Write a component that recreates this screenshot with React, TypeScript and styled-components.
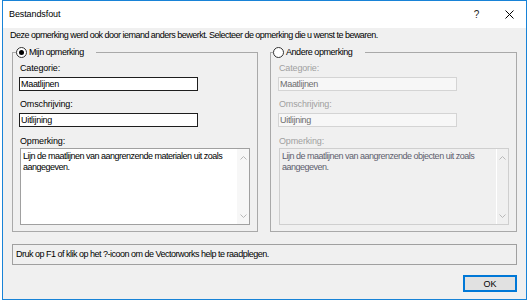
import React from "react";
import styled, { createGlobalStyle } from "styled-components";

const GlobalStyle = createGlobalStyle`
  html, body { margin: 0; padding: 0; background: #ffffff; }
  body { font-family: "Liberation Sans", Arial, sans-serif; font-size: 9px; color: #000; }
  * { box-sizing: border-box; }
`;

const Window = styled.div`
  margin-left: 2px;
  width: 525px;
  height: 300px;
  border: 1px solid #1883d7;
  display: flex;
  flex-direction: column;
`;

const TitleBar = styled.div`
  height: 27px;
  background: #ffffff;
  display: flex;
  align-items: center;
  padding-left: 6px;
`;

const TitleText = styled.div`
  flex: 1;
  font-size: 9px;
  line-height: 12px;
  margin-top: -1px;
  letter-spacing: -0.1px;
`;

const TitleButton = styled.div`
  width: 33px;
  height: 100%;
  display: flex;
  align-items: center;
  justify-content: center;
  font-size: 10px;
  color: #222;
`;

const Body = styled.div`
  flex: 1;
  background: #f0f0f0;
  padding: 1px 9px 0 9px;
  display: flex;
  flex-direction: column;
`;

const Instruction = styled.div`
  line-height: 12px;
  margin-left: -2px;
  height: 12px;
  white-space: nowrap;
  letter-spacing: -0.52px;
`;

const Groups = styled.div`
  display: grid;
  grid-template-columns: 246px 247px;
  column-gap: 12px;
  margin-top: 5px;
`;

const Group = styled.fieldset`
  margin: 0;
  padding: 0;
  height: 186px;
  border: 1px solid #a9a9a9;
  min-width: 0;
`;

const Legend = styled.legend<{ $width: number; $offset: number }>`
  padding: 0;
  margin-left: ${(p) => p.$offset}px;
  width: ${(p) => p.$width}px;
  height: 12px;
  display: flex;
  align-items: center;
  gap: 2px;
  line-height: 12px;
  letter-spacing: -0.45px;
`;

const Radio = styled.span<{ $checked?: boolean }>`
  width: 11px;
  height: 11px;
  border-radius: 50%;
  border: 1px solid #333;
  background: #fff;
  display: inline-flex;
  align-items: center;
  justify-content: center;
  flex: none;
  &::after {
    content: "";
    width: 5px;
    height: 5px;
    border-radius: 50%;
    background: ${(p) => (p.$checked ? "#000" : "transparent")};
  }
`;

const Content = styled.div<{ $inset: number }>`
  display: flex;
  flex-direction: column;
  padding: 4px 0 5px ${(p) => p.$inset}px;
  height: 172px;
`;

const Label = styled.div<{ $disabled?: boolean; $after: number; $before?: number }>`
  line-height: 12px;
  height: 12px;
  letter-spacing: -0.15px;
  color: ${(p) => (p.$disabled ? "#a0a0a0" : "#000")};
  margin-bottom: ${(p) => p.$after}px;
  margin-top: ${(p) => p.$before ?? 0}px;
`;

const Input = styled.div<{ $disabled?: boolean }>`
  width: 179px;
  height: 14px;
  line-height: 12px;
  padding-left: 1px;
  letter-spacing: -0.3px;
  border: 1px solid ${(p) => (p.$disabled ? "#d4d4d4" : "#1e1e1e")};
  background: ${(p) => (p.$disabled ? "#f7f7f7" : "#ffffff")};
  color: ${(p) => (p.$disabled ? "#6d6d6d" : "#000")};
  margin-left: -1px;
`;

const TextBox = styled.div<{ $disabled?: boolean }>`
  width: 230px;
  flex: 1;
  display: flex;
  border: 1px solid ${(p) => (p.$disabled ? "#cfcfcf" : "#a0a0a0")};
  background: ${(p) => (p.$disabled ? "#f0f0f0" : "#ffffff")};
  color: ${(p) => (p.$disabled ? "#5e5e6e" : "#000")};
`;

const TextBody = styled.div`
  flex: 1;
  padding: 2px 2px 0 2px;
  line-height: 11px;
  letter-spacing: -0.5px;
`;

const ScrollBar = styled.div<{ $disabled?: boolean }>`
  width: 12px;
  display: flex;
  flex-direction: column;
  justify-content: space-between;
  align-items: center;
  padding: 7px 0 6px;
  background: ${(p) => (p.$disabled ? "#f0f0f0" : "#f7f7f7")};
  border-left: 1px solid ${(p) => (p.$disabled ? "#ffffff" : "#f7f7f7")};
`;

const StatusBox = styled.div`
  margin-top: 12px;
  height: 21px;
  border: 1px solid #a0a0a0;
  line-height: 19px;
  padding-left: 3px;
  width: 505px;
  letter-spacing: -0.5px;
`;

const Footer = styled.div`
  display: flex;
  justify-content: flex-end;
  margin-top: 10px;
`;

const OkButton = styled.div`
  width: 54px;
  height: 17px;
  border: 2px solid #0078d7;
  background: #e1e1e1;
  display: flex;
  align-items: center;
  justify-content: center;
  line-height: 12px;
`;

const Chevron = ({ up }: { up?: boolean }) => (
  <svg width="7" height="4" viewBox="0 0 7 4">
    <polyline
      points={up ? "0.5,3.5 3.5,0.5 6.5,3.5" : "0.5,0.5 3.5,3.5 6.5,0.5"}
      fill="none"
      stroke="#b8b8b8"
      strokeWidth="1"
    />
  </svg>
);

type PanelProps = {
  title: string;
  checked?: boolean;
  disabled?: boolean;
  legendWidth: number;
  legendOffset: number;
  inset: number;
  text: string;
};

const Panel = ({ title, checked, disabled, legendWidth, legendOffset, inset, text }: PanelProps) => (
  <Group>
    <Legend $width={legendWidth} $offset={legendOffset}>
      <Radio $checked={checked} />
      <span>{title}</span>
    </Legend>
    <Content $inset={inset}>
      <Label $disabled={disabled} $after={3}>Categorie:</Label>
      <Input $disabled={disabled}>Maatlijnen</Input>
      <Label $disabled={disabled} $before={7} $after={3}>Omschrijving:</Label>
      <Input $disabled={disabled}>Uitlijning</Input>
      <Label $disabled={disabled} $before={8} $after={1}>Opmerking:</Label>
      <TextBox $disabled={disabled}>
        <TextBody>{text}</TextBody>
        <ScrollBar $disabled={disabled}>
          <Chevron up />
          <Chevron />
        </ScrollBar>
      </TextBox>
    </Content>
  </Group>
);

export default function App() {
  return (
    <>
      <GlobalStyle />
      <Window>
        <TitleBar>
          <TitleText>Bestandsfout</TitleText>
          <TitleButton>?</TitleButton>
          <TitleButton>
            <svg width="9" height="9" viewBox="0 0 9 9">
              <path d="M0.5 0.5 L8.5 8.5 M8.5 0.5 L0.5 8.5" stroke="#000" strokeWidth="1" />
            </svg>
          </TitleButton>
        </TitleBar>
        <Body>
          <Instruction>
            Deze opmerking werd ook door iemand anders bewerkt. Selecteer de opmerking die u wenst te bewaren.
          </Instruction>
          <Groups>
            <Panel
              title="Mijn opmerking"
              checked
              legendWidth={80}
              legendOffset={3}
              inset={7}
              text="Lijn de maatlijnen van aangrenzende materialen uit zoals aangegeven."
            />
            <Panel
              title="Andere opmerking"
              disabled
              legendWidth={92}
              legendOffset={2}
              inset={8}
              text="Lijn de maatlijnen van aangrenzende objecten uit zoals aangegeven."
            />
          </Groups>
          <StatusBox>Druk op F1 of klik op het ?-icoon om de Vectorworks help te raadplegen.</StatusBox>
          <Footer>
            <OkButton>OK</OkButton>
          </Footer>
        </Body>
      </Window>
    </>
  );
}
